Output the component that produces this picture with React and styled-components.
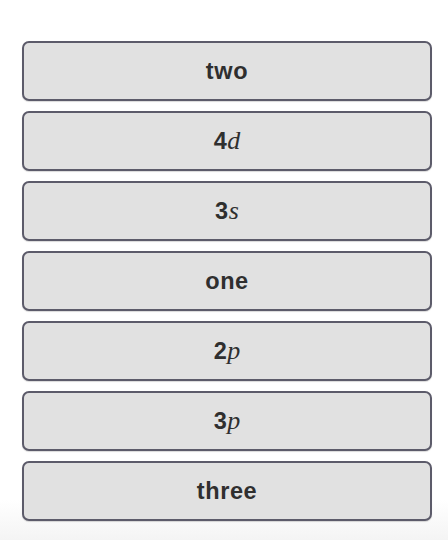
import styled, { createGlobalStyle } from 'styled-components';

const GlobalStyle = createGlobalStyle`
  html, body {
    margin: 0;
    padding: 0;
  }
  body {
    min-height: 540px;
    background: linear-gradient(to bottom, #ffffff 0, #ffffff 500px, #f4f4f4 540px);
    font-family: "Liberation Sans", Arial, sans-serif;
  }
`;

const List = styled.ul`
  list-style: none;
  margin: 0;
  padding: 41px 16px 0 22px;
  display: flex;
  flex-direction: column;
  gap: 10px;
`;

const Item = styled.li`
  box-sizing: border-box;
  height: 60px;
  display: flex;
  align-items: center;
  justify-content: center;
  background: #e1e1e1;
  border: 2px solid #5c5b6a;
  border-radius: 7px;
  box-shadow: 0 1px 1px rgba(0, 0, 0, 0.15);
  color: #2f2f2f;
  font-size: 23.5px;
  font-weight: bold;
  letter-spacing: 0.6px;
`;

const Var = styled.i`
  font-family: "Liberation Serif", "Times New Roman", serif;
  font-weight: normal;
  font-style: italic;
  font-size: 26px;
  letter-spacing: 0;
`;

const items = [
  { label: 'two' },
  { label: '4', v: 'd' },
  { label: '3', v: 's' },
  { label: 'one' },
  { label: '2', v: 'p' },
  { label: '3', v: 'p' },
  { label: 'three' },
];

export default function App() {
  return (
    <>
      <GlobalStyle />
      <List>
        {items.map((it, i) => (
          <Item key={i}>
            {it.label}
            {it.v && <Var>{it.v}</Var>}
          </Item>
        ))}
      </List>
    </>
  );
}
